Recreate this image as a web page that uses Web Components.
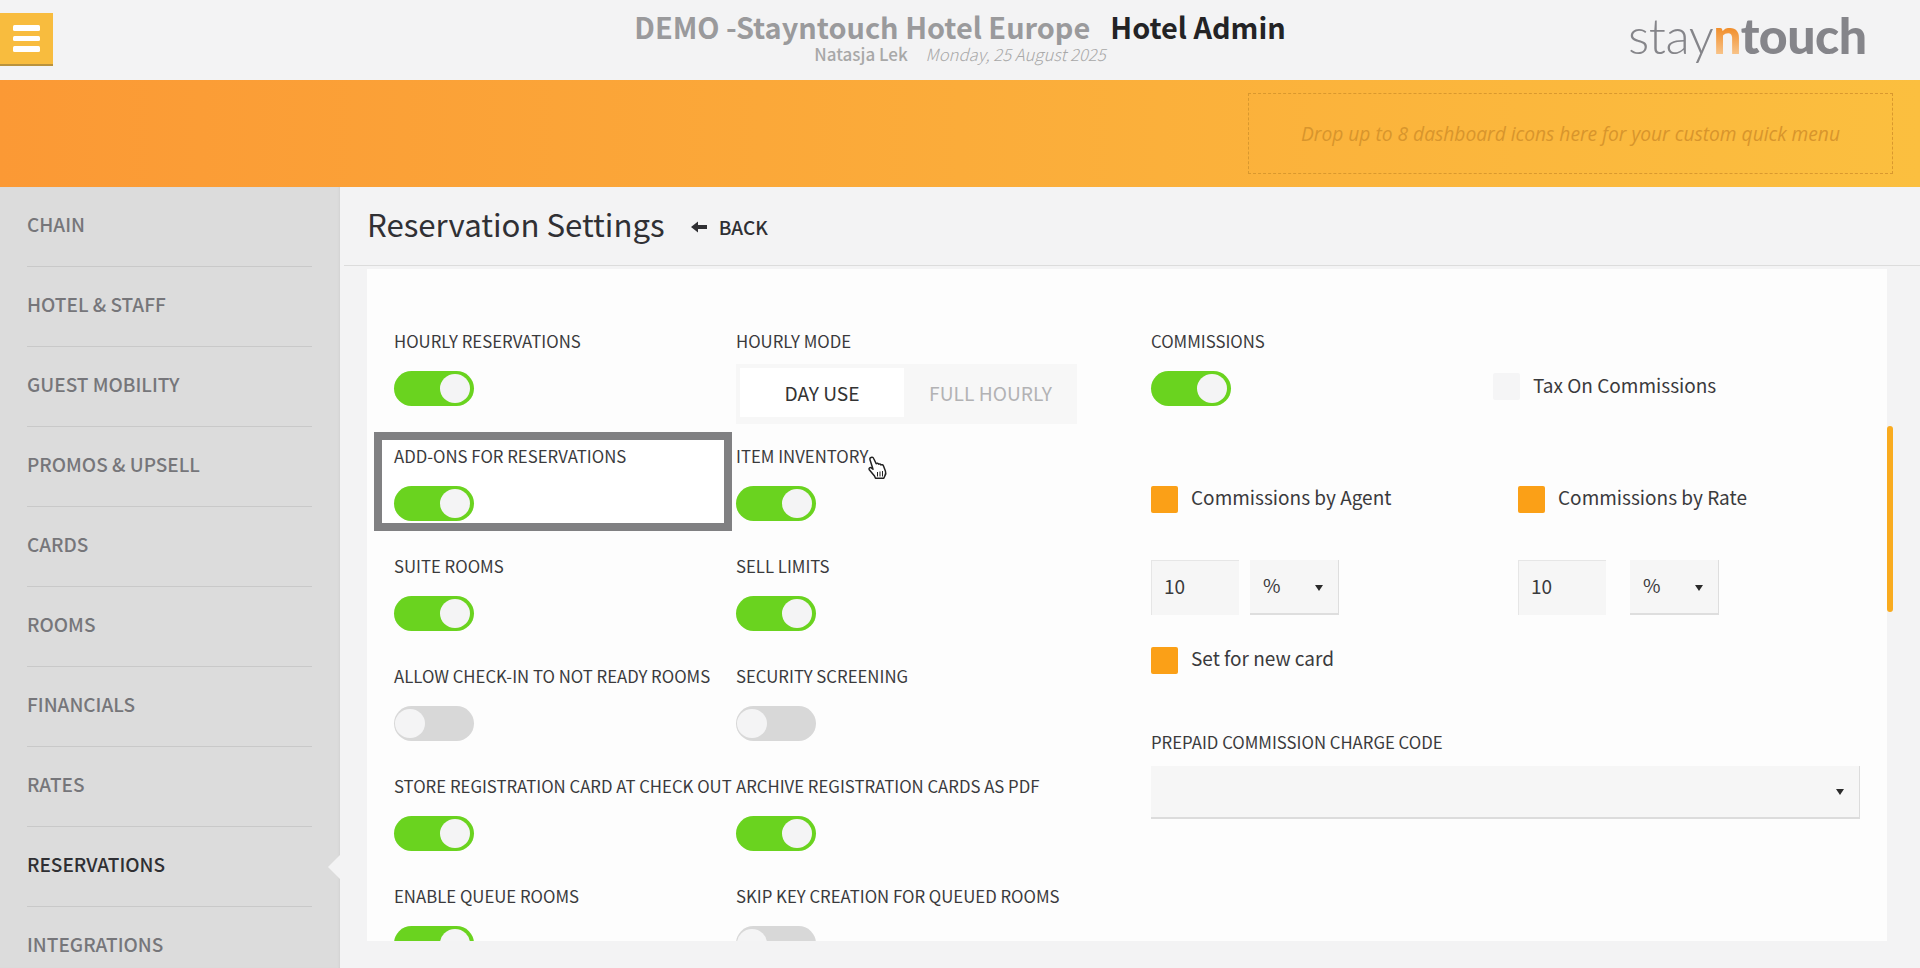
<!DOCTYPE html>
<html>
<head>
<meta charset="utf-8">
<style>
html, body {
  margin: 0;
  width: 1920px;
  height: 968px;
  overflow: hidden;
  background: #f3f3f4;
  font-family: "Noto Sans CJK SC", "Source Sans Pro", "Open Sans", sans-serif;
  color: #333;
}
.page { display: flex; flex-direction: column; height: 968px; }
.body-row { display: flex; flex: 1; min-height: 0; }
</style>
</head>
<body>
<div class="page">
  <app-header></app-header>
  <quick-bar></quick-bar>
  <div class="body-row">
    <side-nav active="RESERVATIONS"></side-nav>
    <settings-page></settings-page>
  </div>
</div>

<script>
const shadow = (el, html) => { el.attachShadow({mode: 'open'}).innerHTML = html; };

class AppHeader extends HTMLElement {
  connectedCallback() {
    shadow(this, `
      <style>
        :host { display: flex; align-items: flex-start; height: 80px; background: #f3f3f4; position: relative; flex: none; }
        .burger { width: 53px; height: 51px; margin-top: 13px; background: #f8bc3e; border-bottom: 2px solid #b9923c;
          display: flex; flex-direction: column; justify-content: center; align-items: center; gap: 5px; }
        .burger i { display: block; width: 27px; height: 5.5px; border-radius: 1.5px; background: #fff; }
        .center { margin-left: 577px; width: 660px; flex: none; text-align: center; }
        .title { font-size: 28.9px; line-height: 34px; margin-top: 9px; font-weight: 700; color: #232325; white-space: nowrap; }
        .title span { color: #9a9a9c; margin-right: 20px; }
        .sub { font-size: 17px; line-height: 20px; color: #a8a8a8; font-weight: 500; margin-top: 1px; white-space: nowrap; }
        .sub em { font-size: 16.7px; font-weight: 300; margin-left: 14px; }
        .logo { position: absolute; left: 1628px; top: 2px; font: 300 50px/66px Lato, sans-serif; color: #85858a; letter-spacing: -.5px; white-space: nowrap; }
        .logo b { font-weight: 900; }
        .logo .n { background: linear-gradient(#f08a24 35%, #fbd9b0 100%); -webkit-background-clip: text; background-clip: text; color: transparent; }
      </style>
      <div class="burger"><i></i><i></i><i></i></div>
      <div class="center">
        <div class="title"><span>DEMO -Stayntouch Hotel Europe</span>Hotel Admin</div>
        <div class="sub">Natasja Lek <em>Monday, 25 August 2025</em></div>
      </div>
      <div class="logo">stay<b class="n">n</b><b>touch</b></div>`);
  }
}

class QuickBar extends HTMLElement {
  connectedCallback() {
    shadow(this, `
      <style>
        :host { display: flex; flex: none; height: 107px; padding: 13px 27px 13px 0; box-sizing: border-box; justify-content: flex-end;
          background: linear-gradient(90deg, #fb9935 0%, #fbbf3f 100%); }
        .drop { width: 645px; height: 81px; box-sizing: border-box; border: 1px dashed #d9982e; display: flex; align-items: center; justify-content: center;
          font: italic 19.2px "Open Sans", sans-serif; color: #d8952c; }
      </style>
      <div class="drop">Drop up to 8 dashboard icons here for your custom quick menu</div>`);
  }
}

class SideNav extends HTMLElement {
  connectedCallback() {
    const items = ['CHAIN', 'HOTEL &amp; STAFF', 'GUEST MOBILITY', 'PROMOS &amp; UPSELL', 'CARDS', 'ROOMS', 'FINANCIALS', 'RATES', 'RESERVATIONS', 'INTEGRATIONS'];
    const active = this.getAttribute('active');
    shadow(this, `
      <style>
        :host { display: block; flex: none; width: 340px; background: #dcdcdc; overflow: hidden; box-shadow: inset -2px 0 2px -1px #d2d2d2; }
        ul { list-style: none; margin: 0; padding: 0 28px 0 27px; }
        li { position: relative; height: 80px; line-height: 73px; box-sizing: border-box; border-bottom: 1px solid #c9c9c9; font-size: 19px; font-weight: 500; color: #76767a; white-space: nowrap; }
        li.on { color: #2f2f33; }
        li.on::after { content: ""; position: absolute; right: -28px; top: 28px; border: 12px solid transparent; border-left: 0; border-right-color: #f3f3f4; }
      </style>
      <ul>${items.map(t => `<li class="${t === active ? 'on' : ''}">${t}</li>`).join('')}</ul>`);
  }
}

class ToggleField extends HTMLElement {
  connectedCallback() {
    const on = this.hasAttribute('on');
    const label = this.getAttribute('label');
    shadow(this, `
      <style>
        :host { display: block; position: relative; white-space: nowrap; }
        :host([mark])::before { content: ""; position: absolute; left: -20px; top: -12px; width: 342px; height: 83px; border: 8px solid #808082; background: #fff; }
        .label { font-size: 16.75px; line-height: 24px; color: #3a3a3c; position: relative; }
        .sw { position: relative; width: 80px; height: 35px; margin-top: 18px; border-radius: 18px; background: ${on ? '#6ad31f' : '#d8d8d8'}; }
        .sw i { position: absolute; top: 3px; width: 30px; height: 29px; border-radius: 50%; background: #f4f4f5; ${on ? 'right: 4px;' : 'left: 1px;'} }
      </style>
      <div class="label">${label}</div>
      <div class="sw"><i></i></div>`);
  }
}

class SegControl extends HTMLElement {
  connectedCallback() {
    shadow(this, `
      <style>
        :host { display: block; white-space: nowrap; }
        .label { font-size: 16.75px; line-height: 24px; color: #3a3a3c; }
        .seg { display: flex; width: 341px; height: 60px; margin-top: 11px; padding: 4px 0 7px 4px; box-sizing: border-box; background: #f7f7f7; }
        span { display: flex; align-items: center; justify-content: center; font-size: 19.2px; line-height: 24px; padding-top: 1px; }
        .a { width: 164px; background: #fff; color: #333; }
        .b { flex: 1; color: #b2b2b4; }
      </style>
      <div class="label">${this.getAttribute('label')}</div>
      <div class="seg"><span class="a">DAY USE</span><span class="b">FULL HOURLY</span></div>`);
  }
}

class CheckItem extends HTMLElement {
  connectedCallback() {
    const on = this.hasAttribute('on');
    shadow(this, `
      <style>
        :host { display: flex; align-items: center; height: 27px; white-space: nowrap; font-size: 19px; color: #3a3a3c; }
        i { width: 27px; height: 27px; border-radius: 2px; margin-right: 13px; flex: none; background: ${on ? '#fba017' : '#f5f5f6'}; }
        span { position: relative; top: var(--lift, -3px); line-height: 24px; }
      </style>
      <i></i><span><slot></slot></span>`);
  }
}

class NumSelect extends HTMLElement {
  connectedCallback() {
    shadow(this, `
      <style>
        :host { display: flex; gap: var(--gap, 11px); font-size: 19px; color: #3a3a3c; }
        .in { width: 88px; height: 55px; box-sizing: border-box; background: #f6f6f6; padding-left: 12px; line-height: 49px; border-left: 1px solid #e6e6e6; border-top: 1px solid #e6e6e6; }
        .sel { width: 89px; height: 55px; box-sizing: border-box; background: #f6f6f6; position: relative; padding-left: 13px; line-height: 50px; border-right: 1px solid #dedede; border-bottom: 2px solid #dedede; }
        .sel::after { content: ""; position: absolute; right: 15px; top: 25px; border: 4px solid transparent; border-top: 6px solid #2b2b2b; border-bottom: 0; }
      </style>
      <div class="in">${this.getAttribute('value')}</div>
      <div class="sel">${this.getAttribute('unit')}</div>`);
  }
}

class WideSelect extends HTMLElement {
  connectedCallback() {
    shadow(this, `
      <style>
        :host { display: block; white-space: nowrap; }
        .label { font-size: 16.75px; line-height: 24px; color: #3a3a3c; }
        .sel { position: relative; height: 53px; margin-top: 12px; background: #f6f6f6; border-right: 1px solid #dcdcdc; border-bottom: 2px solid #dcdcdc; box-sizing: border-box; }
        .sel::after { content: ""; position: absolute; right: 15px; top: 23px; border: 4px solid transparent; border-top: 6px solid #2b2b2b; border-bottom: 0; }
      </style>
      <div class="label">${this.getAttribute('label')}</div>
      <div class="sel"></div>`);
  }
}

class HandCursor extends HTMLElement {
  connectedCallback() {
    shadow(this, `
      <style>
        :host { position: absolute; left: 867px; top: 456px; width: 22px; height: 24px; }
        svg { display: block; }
      </style>
      <svg width="22" height="24" viewBox="0 0 22 24">
        <path d="M4 1.500c1.300-.6 2.300 0 2.800 1.200l2.400 5c.8-.7 1.900-.4 2.400.5.8-.6 2-.3 2.400.7.9-.5 2-.1 2.400.9l2 5.200c.7 1.800.4 3.500-.6 5l-1 2.300H8.500l-1-2.300-5.200-6.300c-.9-1.300.6-2.800 2-1.800l1.700 1.300L3 3.800c-.4-1 0-1.900 1-2.300z" fill="#fff" stroke="#222" stroke-width="1.500" stroke-linejoin="round"/>
        <path d="M10.500 16v4.500M13 15.500v5M15.500 15v5.500" stroke="#222" stroke-width="1"/>
      </svg>`);
  }
}

class SettingsPage extends HTMLElement {
  connectedCallback() {
    shadow(this, `
      <style>
        :host { display: block; flex: 1; min-width: 0; position: relative; overflow: hidden; }
        header { height: 79px; margin-left: 4px; border-bottom: 1px solid #dcdcdc; box-sizing: border-box; display: flex; align-items: center; padding: 0 0 4px 23px; }
        h1 { margin: 0; font-size: 31.2px; font-weight: 400; color: #303034; line-height: 40px; }
        .back { display: flex; align-items: center; margin: 5px 0 0 26px; font-size: 19px; line-height: 24px; font-weight: 500; color: #2f2f33; }
        .back svg { margin-right: 12px; }
        .card { position: absolute; left: 27px; top: 82px; width: 1520px; height: 672px; background: #fdfdfd; overflow: hidden; padding: 60px 0 0 27px; box-sizing: border-box; display: flex; }
        .grid { display: grid; grid-template-columns: 342px 342px; grid-template-rows: 115px 110px 110px 110px 110px 110px; width: 757px; flex: none; }
        .right { width: 709px; flex: none; display: flex; flex-direction: column; }
        .top { display: flex; position: relative; }
        .tax { position: absolute; left: 342px; top: 44px; --lift: -2px; }
        .pair { display: grid; grid-template-columns: 367px 1fr; }
        .checks { margin-top: 80px; }
        .nums { margin-top: 47px; }
        .nums num-select + num-select { --gap: 24px; }
        .setnew { margin-top: 32px; }
        wide-select { margin-top: 56px; }
        .bar { position: absolute; left: 1547px; top: 239px; width: 6px; height: 186px; border-radius: 3px; background: #f9ab1f; }
      </style>
      <header>
        <h1>Reservation Settings</h1>
        <div class="back"><svg width="16" height="12" viewBox="0 0 16 12"><path d="M0 6l7-5.500v3.500h9v4H7v3.500z" fill="#2f2f33"/></svg>BACK</div>
      </header>
      <div class="card">
        <div class="grid">
          <toggle-field label="HOURLY RESERVATIONS" on></toggle-field>
          <seg-control label="HOURLY MODE"></seg-control>
          <toggle-field label="ADD-ONS FOR RESERVATIONS" on mark></toggle-field>
          <toggle-field label="ITEM INVENTORY" on></toggle-field>
          <toggle-field label="SUITE ROOMS" on></toggle-field>
          <toggle-field label="SELL LIMITS" on></toggle-field>
          <toggle-field label="ALLOW CHECK-IN TO NOT READY ROOMS"></toggle-field>
          <toggle-field label="SECURITY SCREENING"></toggle-field>
          <toggle-field label="STORE REGISTRATION CARD AT CHECK OUT" on></toggle-field>
          <toggle-field label="ARCHIVE REGISTRATION CARDS AS PDF" on></toggle-field>
          <toggle-field label="ENABLE QUEUE ROOMS" on></toggle-field>
          <toggle-field label="SKIP KEY CREATION FOR QUEUED ROOMS"></toggle-field>
        </div>
        <div class="right">
          <div class="top">
            <toggle-field label="COMMISSIONS" on></toggle-field>
            <check-item class="tax">Tax On Commissions</check-item>
          </div>
          <div class="pair checks">
            <check-item on>Commissions by Agent</check-item>
            <check-item on>Commissions by Rate</check-item>
          </div>
          <div class="pair nums">
            <num-select value="10" unit="%"></num-select>
            <num-select value="10" unit="%"></num-select>
          </div>
          <check-item class="setnew" on>Set for new card</check-item>
          <wide-select label="PREPAID COMMISSION CHARGE CODE"></wide-select>
        </div>
      </div>
      <div class="bar"></div>`);
  }
}

customElements.define('app-header', AppHeader);
customElements.define('quick-bar', QuickBar);
customElements.define('side-nav', SideNav);
customElements.define('toggle-field', ToggleField);
customElements.define('seg-control', SegControl);
customElements.define('check-item', CheckItem);
customElements.define('num-select', NumSelect);
customElements.define('wide-select', WideSelect);
customElements.define('hand-cursor', HandCursor);
customElements.define('settings-page', SettingsPage);

document.body.appendChild(document.createElement('hand-cursor'));
</script>
</body>
</html>
